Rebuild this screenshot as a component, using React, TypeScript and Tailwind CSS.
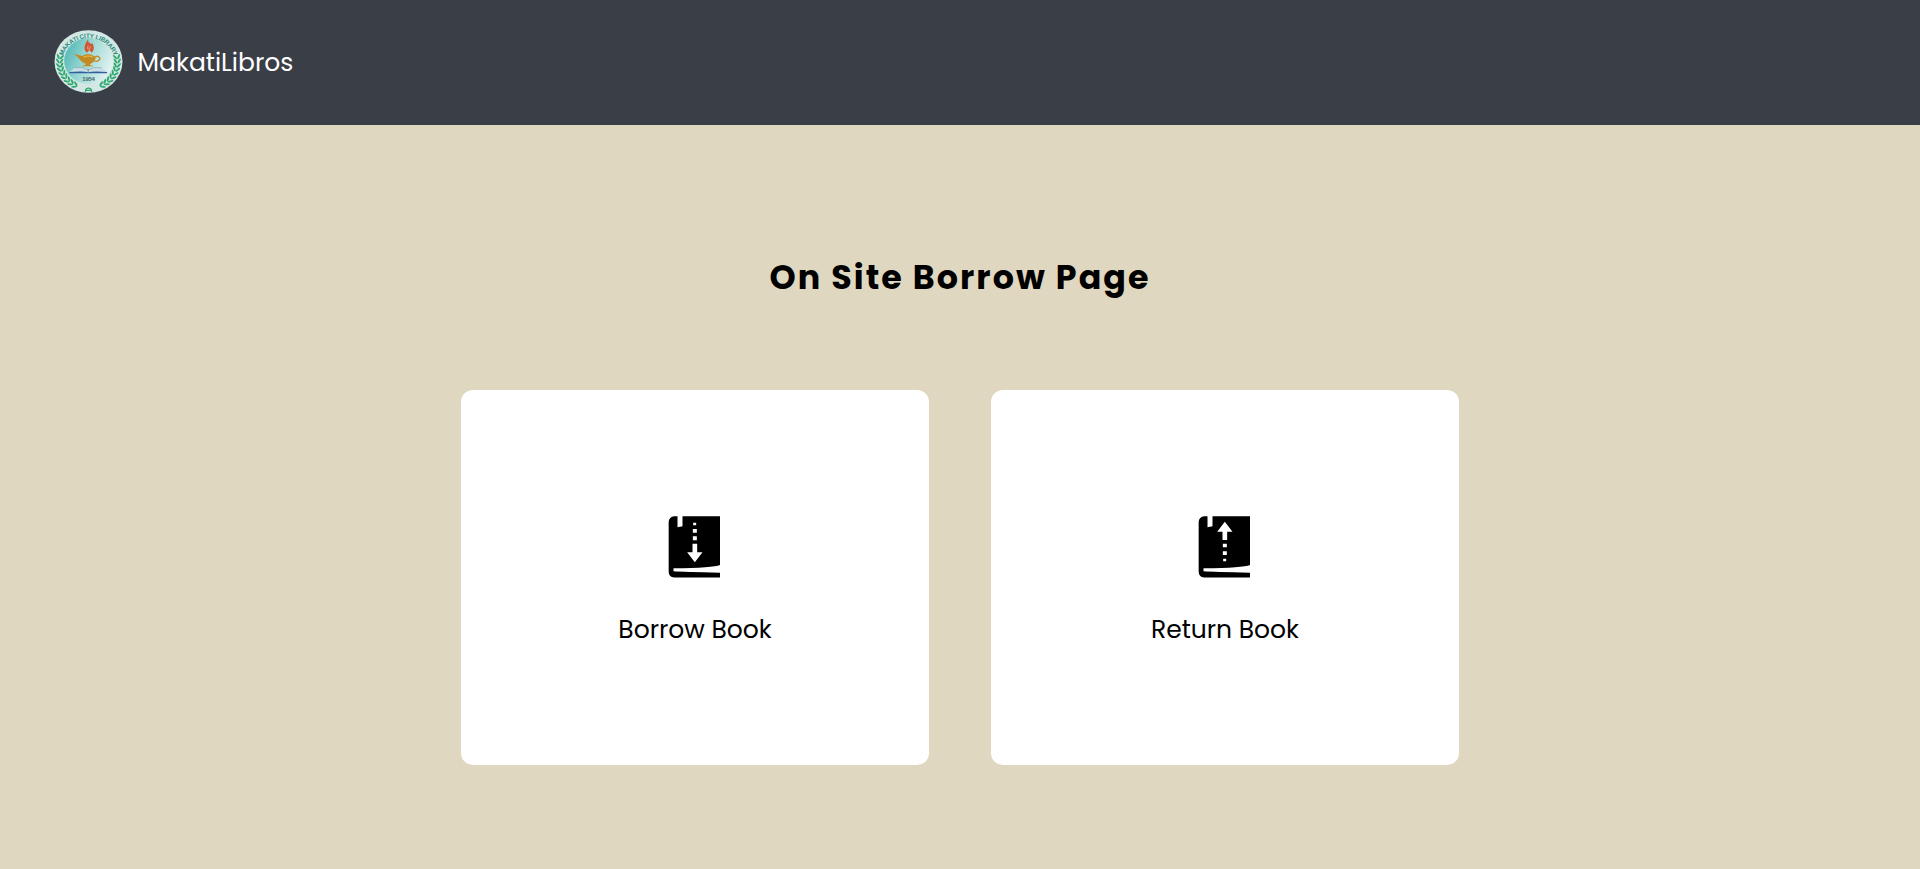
import React from "react";

const leafAngles = [190, 181, 172, 163, 154, 145, 136, 127, 118];

function Wreath() {
  return (
    <g transform="translate(102 94.5) scale(1 0.93)">
      <g fill="#2fa870">
        {leafAngles.map((a) => (
          <g key={a} transform={`rotate(${a})`}>
            <ellipse rx="9" ry="3.1" transform="translate(92 0) rotate(58)" />
            <ellipse rx="9" ry="3.1" transform="translate(81 0) rotate(122)" />
          </g>
        ))}
      </g>
    </g>
  );
}

function Logo() {
  return (
    <svg
      className="h-[63px] w-[68px] overflow-visible"
      viewBox="-1.5 0 204 189"
      aria-label="Makati City Library"
    >
      <defs>
        <linearGradient id="disc" x1="0" y1="0.2" x2="1" y2="0.6">
          <stop offset="0" stopColor="#4fb6b4" />
          <stop offset="0.5" stopColor="#a0dad6" />
          <stop offset="1" stopColor="#e3f3f1" />
        </linearGradient>
        <path id="rim" d="M23 98 A79 74 0 0 1 181 98" />
      </defs>
      <ellipse cx="102" cy="94.5" rx="102" ry="94" fill="#d3e8e4" />
      <Wreath />
      <g transform="matrix(-1 0 0 1 204 0)">
        <Wreath />
      </g>
      <ellipse cx="102" cy="93" rx="73" ry="69" fill="url(#disc)" />
      <text
        fill="#2c8a7b"
        fontSize="19"
        fontWeight="700"
        letterSpacing="-0.6"
        className="font-['Liberation_Sans',sans-serif]"
      >
        <textPath href="#rim" startOffset="50%" textAnchor="middle">
          MAKATI CITY LIBRARY
        </textPath>
      </text>
      <path
        d="M97 68 C85 58 90 44 101 28 C101 38 103 41 106 37 C107 42 110 45 113 39 C120 50 119 60 112 68 L105 60 Z"
        fill="#cf5632"
      />
      <path d="M101 47 l-2 9 6 2 3 -9" stroke="#f0a888" strokeWidth="2.5" fill="none" />
      <path
        d="M57 72 C67 71 74 77 84 78 Q100 66 118 78 C123 81 125 86 121 91 C116 98 111 101 106 102 L107 105 L118 109 H80 L92 105 L94 101 C75 96 75 80 57 72 Z"
        fill="#c18a22"
      />
      <path d="M87 82 Q101 74 115 82" stroke="#e8bd50" strokeWidth="3.5" fill="none" />
      <path
        d="M119 83 C129 73 143 84 132 92 Q124 96 119 92"
        stroke="#c18a22"
        strokeWidth="4"
        fill="none"
      />
      <path d="M46 125 L61 113 Q86 110 101 119 Q117 110 142 113 L157 125 Z" fill="#c9dde6" />
      <path
        d="M61 113 Q86 110 101 119 Q117 110 142 113"
        stroke="#6f929f"
        strokeWidth="1.5"
        fill="none"
      />
      <path d="M45 126 Q87 122 101 127 Q118 122 158 126 V130 H45 Z" fill="#315e9f" />
      <path d="M101 117 V127" stroke="#536c80" strokeWidth="2" />
      <text
        x="102"
        y="153"
        textAnchor="middle"
        fontSize="18"
        fontWeight="700"
        letterSpacing="-0.7"
        fill="#45656a"
        className="font-['Liberation_Sans',sans-serif]"
      >
        1954
      </text>
      <path
        d="M92 185 L95 177 Q102 172 109 177 L112 185 M95 181 H109"
        stroke="#2fa56c"
        strokeWidth="4"
        fill="none"
      />
    </svg>
  );
}

function BookIcon({ direction }: { direction: "down" | "up" }) {
  return (
    <svg className="h-[62px] w-[54px]" viewBox="-1.5 0 162 186" aria-hidden="true">
      <path
        d="M17 0.5 H27 V34 L42 31 V0.5 H154.5 V147 Q134 156 15 157 V166 Q45 168 154.5 170 V184.5 H17 Q0.5 182 0.5 167 V17 Q2 2 17 0.5 Z"
        fill="#000"
      />
      {direction === "down" ? (
        <path
          d="M74 20 H83 V28 H74 Z M73 39 H85 V50 H73 Z M73 61 H85 V73 H73 Z M72 83 H86 V109 H102 L79 139 L56 109 H72 Z"
          fill="#fff"
        />
      ) : (
        <path
          d="M79 17 L102 47 H86 V72 H72 V47 H56 Z M73 83 H85 V94 H73 Z M73 106 H85 V117 H73 Z M74 128 H83 V136 H74 Z"
          fill="#fff"
        />
      )}
    </svg>
  );
}

function Card({ label, direction }: { label: string; direction: "down" | "up" }) {
  return (
    <button
      type="button"
      className="flex h-[375px] w-[468px] flex-col items-center justify-start rounded-xl bg-white pt-[125.5px]"
    >
      <BookIcon direction={direction} />
      <span className="mt-[33.5px] text-[25px] leading-[37px] text-black">{label}</span>
    </button>
  );
}

export default function App() {
  return (
    <div className="flex h-screen flex-col overflow-hidden bg-[#dfd7bf] font-[Poppins,Inter,sans-serif]">
      <header className="flex h-[125px] shrink-0 items-center bg-[#3a3e47] pb-[2px] pl-[54px]">
        <Logo />
        <span className="ml-[15.6px] pt-[2px] text-[25px] leading-9 text-white">MakatiLibros</span>
      </header>
      <main className="flex flex-col items-center">
        <h1 className="mt-[129px] text-[33.3px] leading-[48px] font-bold tracking-[2.04px] text-black">
          On Site Borrow Page
        </h1>
        <div className="mt-[88px] flex gap-[62px]">
          <Card label="Borrow Book" direction="down" />
          <Card label="Return Book" direction="up" />
        </div>
      </main>
    </div>
  );
}
